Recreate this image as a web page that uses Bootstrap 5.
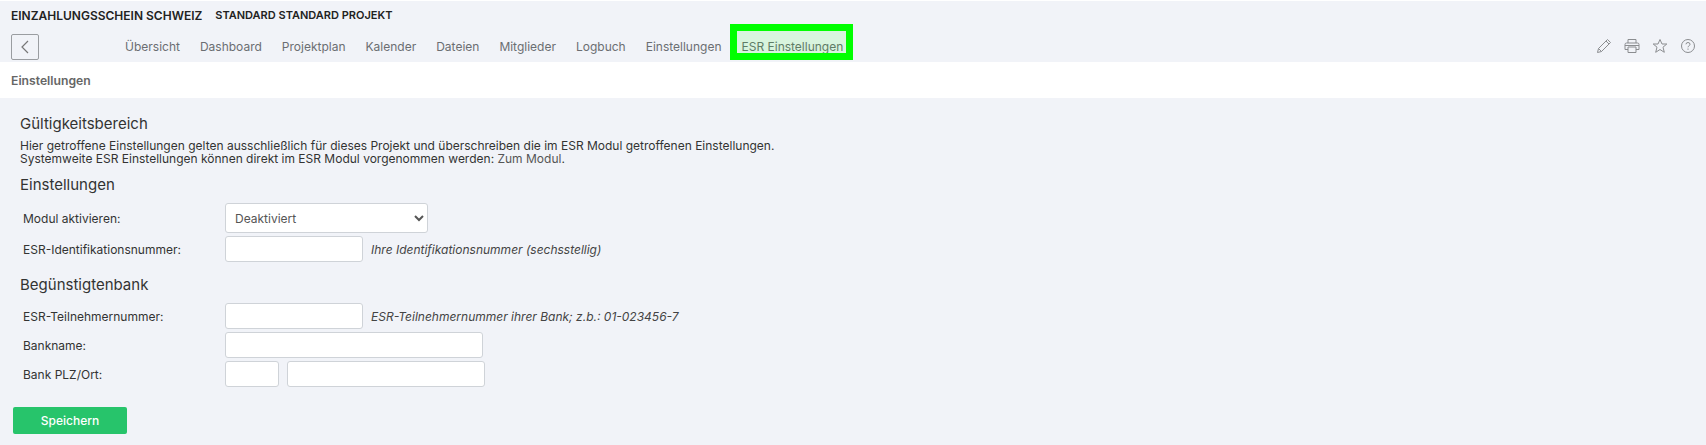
<!DOCTYPE html>
<html lang="de">
<head>
<meta charset="utf-8">
<title>ESR Einstellungen</title>
<link rel="stylesheet" href="https://cdn.jsdelivr.net/npm/bootstrap@5.3.0/dist/css/bootstrap.min.css">
<style>
html,body{height:445px;overflow:hidden}
body{font-family:Inter,"Liberation Sans",sans-serif;font-size:12px;line-height:13px;color:#333;background:#f1f3f8;padding-top:1px;box-shadow:inset 0 1px 0 #fff}
.head-zone{height:61px;padding:0 0 0 11px}
.title-row{height:30px;padding-top:8px;font-weight:600;color:#222;text-transform:uppercase}
.title-main{font-size:12px;margin-right:13px}
.title-sub{font-size:11px}
.nav-row{height:31px}
.back-btn{width:28px;height:26px;margin-top:3px;border:1px solid #9a9da1;border-radius:2px;color:#777;background:transparent;padding:0}
.tab-list{margin-left:76px;height:31px}
.tab-link{color:#6b6e72;font-size:12px;text-decoration:none;padding:0 10px;line-height:17px;margin-top:7px;display:block}
.tab-mark{position:relative}
.tab-mark::after{content:"";position:absolute;left:-2px;right:0;top:-14px;height:36px;border:7px solid #00ff00;background:rgba(0,255,0,.1);pointer-events:none}
.tool-icons{margin-left:auto;gap:12px;padding-right:10px;padding-top:7px}
.sub-bar{height:36px;background:#fff;padding:0 11px;line-height:37px;font-weight:600;color:#666;font-size:12.2px}
.form-zone{padding:16px 20px 0}
.sect-title{font-size:15px;line-height:20px;font-weight:400;color:#333;margin:0}
.intro-text{margin:5px 0 0;line-height:13px;font-size:12px}
.intro-text a{color:#555;text-decoration:none}
.gap-head{margin-top:10px}
.gap-bank{margin-top:13px}
.gap-tight{margin-top:3px}
.form-line{display:flex;align-items:center;padding-left:3px}
.form-line label{width:202px;font-size:12px}
.ctl{height:26px;border:1px solid #cfd3d8;border-radius:3px;background:#fff;padding:0 9px;font-size:12px;color:#555;font-family:inherit;outline:0}
.ctl-select{width:203px;height:30px;padding:0 30px 0 5px}
.w-short{width:138px}.w-long{width:258px}.w-zip{width:54px}.w-city{width:198px;margin-left:8px}
.help-hint{font-style:italic;margin-left:8px;color:#444}
.save-btn{width:114px;height:27px;margin:20px 0 0 -7px;background:#27c46b;border:0;border-radius:2px;color:#fff;font-size:12px;font-weight:500;padding:0}
</style>
</head>
<body>
<header class="head-zone">
  <div class="title-row d-flex"><span class="title-main">Einzahlungsschein Schweiz</span><span class="title-sub">Standard Standard Projekt</span></div>
  <div class="nav-row d-flex">
    <button class="back-btn d-flex align-items-center justify-content-center" type="button" aria-label="Zurück">
      <svg width="10" height="14" viewBox="0 0 10 14" fill="none" stroke="currentColor" stroke-width="1.2"><path d="M8 1 2 7l6 6"/></svg>
    </button>
    <nav class="tab-list d-flex">
      <a class="tab-link" href="#">Übersicht</a>
      <a class="tab-link" href="#">Dashboard</a>
      <a class="tab-link" href="#">Projektplan</a>
      <a class="tab-link" href="#">Kalender</a>
      <a class="tab-link" href="#">Dateien</a>
      <a class="tab-link" href="#">Mitglieder</a>
      <a class="tab-link" href="#">Logbuch</a>
      <a class="tab-link" href="#">Einstellungen</a>
      <a class="tab-link tab-mark" href="#">ESR Einstellungen</a>
    </nav>
    <div class="tool-icons d-flex align-items-start">
      <svg width="16" height="16" viewBox="0 0 16 16" fill="none" stroke="#8b8d90" stroke-width="1"><path d="M1.5 14.500 2.500 10.500 11.500 1.500 14.500 4.500 5.500 13.500ZM2.500 10.500 5.500 13.500M10 3 13 6"/></svg>
      <svg width="16" height="16" viewBox="0 0 16 16" fill="none" stroke="#8b8d90" stroke-width="1"><path d="M4 5V1.500H12V5M1 6.500Q1 5 2.500 5H13.500Q15 5 15 6.500V11.500H12M4 11.500H1V6.500M4 9H12V14.500H4ZM1 7.500H15"/></svg>
      <svg width="16" height="16" viewBox="0 0 16 16" fill="none" stroke="#8b8d90" stroke-width="1"><path d="M8 1.500 10 6H14.800L11 9.200 12.300 14.300 8 11.500 3.700 14.300 5 9.200 1.200 6H6Z"/></svg>
      <svg width="16" height="16" viewBox="0 0 16 16" fill="none" stroke="#8b8d90" stroke-width="1"><circle cx="8" cy="8" r="6.500"/><path d="M6 6.300Q6 4.500 8 4.500T10 6.300C10 7.800 8 7.800 8 9.300M8 10.500V11.800"/></svg>
    </div>
  </div>
</header>
<div class="sub-bar">Einstellungen</div>
<main class="form-zone">
  <h2 class="sect-title">Gültigkeitsbereich</h2>
  <p class="intro-text">Hier getroffene Einstellungen gelten ausschließlich für dieses Projekt und überschreiben die im ESR Modul getroffenen Einstellungen.<br>Systemweite ESR Einstellungen können direkt im ESR Modul vorgenommen werden: <a href="#">Zum Modul</a>.</p>
  <h2 class="sect-title gap-head">Einstellungen</h2>
  <form class="d-flex flex-column align-items-start">
    <div class="form-line mt-2"><label for="m1">Modul aktivieren:</label><select id="m1" class="ctl ctl-select"><option>Deaktiviert</option></select></div>
    <div class="form-line gap-tight"><label for="m2">ESR-Identifikationsnummer:</label><input id="m2" class="ctl w-short" type="text"><span class="help-hint">Ihre Identifikationsnummer (sechsstellig)</span></div>
    <h2 class="sect-title gap-bank">Begünstigtenbank</h2>
    <div class="form-line mt-2"><label for="m3">ESR-Teilnehmernummer:</label><input id="m3" class="ctl w-short" type="text"><span class="help-hint">ESR-Teilnehmernummer ihrer Bank; z.b.: 01-023456-7</span></div>
    <div class="form-line gap-tight"><label for="m4">Bankname:</label><input id="m4" class="ctl w-long" type="text"></div>
    <div class="form-line gap-tight"><label for="m5">Bank PLZ/Ort:</label><input id="m5" class="ctl w-zip" type="text"><input class="ctl w-city" type="text" aria-label="Ort"></div>
    <button class="save-btn" type="button">Speichern</button>
  </form>
</main>
</body>
</html>
